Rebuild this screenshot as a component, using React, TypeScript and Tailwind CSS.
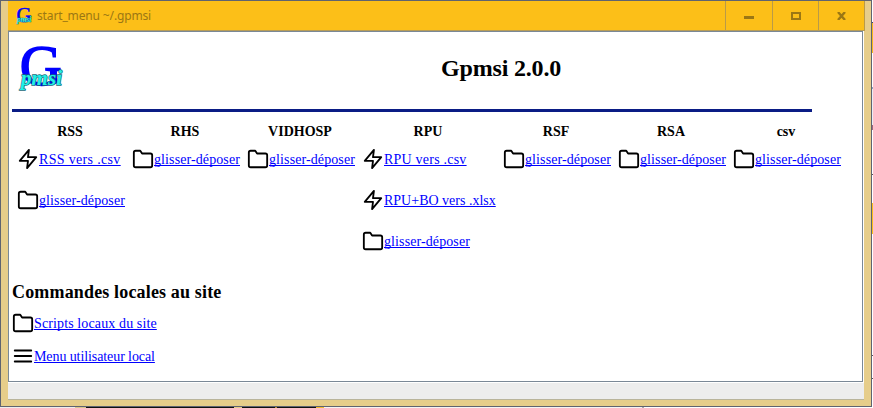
import React from "react";

type Kind = "folder" | "zap" | "menu";
type Item = { kind: Kind; label: string; tracking: string };

const drop: Item = { kind: "folder", label: "glisser-déposer", tracking: "tracking-[0.1px]" };

const columns: { title: string; width: string; items: Item[] }[] = [
  { title: "RSS", width: "w-[115px]", items: [{ kind: "zap", label: "RSS vers .csv", tracking: "tracking-[0.33px]" }, drop] },
  { title: "RHS", width: "w-[115px]", items: [drop] },
  { title: "VIDHOSP", width: "w-[115px]", items: [drop] },
  {
    title: "RPU",
    width: "w-[141px]",
    items: [
      { kind: "zap", label: "RPU vers .csv", tracking: "tracking-[0.22px]" },
      { kind: "zap", label: "RPU+BO vers .xlsx", tracking: "tracking-normal" },
      drop,
    ],
  },
  { title: "RSF", width: "w-[115px]", items: [drop] },
  { title: "RSA", width: "w-[115px]", items: [drop] },
  { title: "csv", width: "w-[115px]", items: [drop] },
];

const local: Item[] = [
  { kind: "folder", label: "Scripts locaux du site", tracking: "tracking-[0.12px]" },
  { kind: "menu", label: "Menu utilisateur local", tracking: "tracking-[-0.09px]" },
];

function Glyph({ kind }: { kind: Kind }) {
  return (
    <svg viewBox="0 0 24 24" className="size-[22px] shrink-0 fill-none stroke-black stroke-2" strokeLinecap="round" strokeLinejoin="round">
      {kind === "folder" && <path d="M22 19a2 2 0 0 1-2 2H4a2 2 0 0 1-2-2V5a2 2 0 0 1 2-2h5l2 3h9a2 2 0 0 1 2 2z" />}
      {kind === "zap" && <path d="M13 2 3 14h9l-1 8 10-12h-9z" />}
      {kind === "menu" && <path d="M3 6h18M3 12h18M3 18h18" />}
    </svg>
  );
}

function Command({ item }: { item: Item }) {
  return (
    <div className="flex h-[22px] items-center">
      <Glyph kind={item.kind} />
      <a className={`${item.tracking} mt-[2px] text-[14px] leading-[16px] whitespace-nowrap text-[#0000ff] underline decoration-1 underline-offset-1 [text-decoration-skip-ink:none]`}>
        {item.label}
      </a>
    </div>
  );
}

function Logo({ className }: { className: string }) {
  return (
    <svg viewBox="0 0 44 48" className={`${className} overflow-visible`}>
      <text x="0.8" y="43.2" fontSize="57.5" textLength="42" lengthAdjust="spacingAndGlyphs" fill="#0000ff" stroke="#0000ff" strokeWidth="1.5" fontFamily="Liberation Serif, serif">G</text>
      <text x="2" y="43" fontSize="20.5" fontWeight="bold" fontStyle="italic" textLength="41" lengthAdjust="spacingAndGlyphs" fill="#20f0e8" stroke="#186878" strokeWidth="1.3" paintOrder="stroke" fontFamily="Liberation Serif, serif">pmsi</text>
    </svg>
  );
}

export default function App() {
  return (
    <div className="h-[408px] w-[873px] overflow-hidden bg-white font-['Liberation_Serif',serif] text-black">
      <div className="flex h-[407px]">
        <div className="flex h-[407px] w-[872px] shrink-0 flex-col border border-[#5f6370] bg-[#e6cd8a] px-[7px] pb-[6px]">
          <div className="flex h-[30px] w-[857px] shrink-0 border-b border-[#b79c55] bg-[#fcbf18] text-[#9b7714]">
            <div className="flex flex-1 items-center pl-[8px]">
              <Logo className="h-[17px] w-[16px]" />
              <span className="ml-[5px] font-['Noto_Sans',sans-serif] text-[12px] tracking-[-0.14px]">start_menu ~/.gpmsi</span>
            </div>
            <div className="flex w-[47px] items-center justify-center border-l border-[#b99a48]">
              <span className="mt-[4px] h-[3px] w-[10px] bg-[#9b7714]" />
            </div>
            <div className="flex w-[46px] items-center justify-center border-l border-[#b99a48]">
              <span className="h-[8px] w-[10px] border-2 border-[#9b7714]" />
            </div>
            <div className="flex w-[47px] items-center justify-center border-x border-[#b99a48]">
              <svg viewBox="0 0 9 8" className="h-[8px] w-[9px] fill-none stroke-[#9b7714] stroke-[2.4]"><path d="M1 0 8 8M8 0 1 8" /></svg>
            </div>
          </div>
          <div className="flex h-[369px] w-[856px] shrink-0 flex-col border-b border-[#b9b49b] bg-[#ededed]">
            <div className="h-[352px] border-r border-b border-white">
              <div className="flex h-[351px] flex-col border border-[#7a8896] bg-white pl-[3px]">
                <header className="flex h-[77px] w-[800px] shrink-0">
                  <Logo className="mt-[10px] ml-[7px] h-[48px] w-[44px] shrink-0" />
                  <h1 className="mt-[22px] ml-[378px] text-[24px] leading-[28px] font-bold tracking-[-0.18px] whitespace-nowrap">Gpmsi 2.0.0</h1>
                </header>
                <div className="h-[3px] w-[800px] shrink-0 bg-[#0a1c85]" />
                <div className="flex h-[170px] shrink-0 pl-[5px]">
                  {columns.map((c) => (
                    <section key={c.title} className={`${c.width} shrink-0`}>
                      <h2 className="mt-[12px] mr-[9px] text-center text-[14px] leading-[16px] font-bold">{c.title}</h2>
                      <div className="mt-[8px] flex flex-col gap-[19px]">
                        {c.items.map((i) => <Command key={i.label} item={i} />)}
                      </div>
                    </section>
                  ))}
                </div>
                <h2 className="text-[18px] leading-[20px] font-bold tracking-[0.16px]">Commandes locales au site</h2>
                <div className="mt-[10px] flex flex-col gap-[11px]">
                  {local.map((i) => <Command key={i.label} item={i} />)}
                </div>
              </div>
            </div>
          </div>
        </div>
        <div className="flex w-px flex-col">
          <div className="h-[22px] bg-white" />
          <div className="h-px bg-[#3c4468]" />
          <div className="h-[30px] bg-[#f9ba18]" />
          <div className="h-[34px] bg-white" />
          <div className="h-[2px] bg-[#8fa3bd]" />
          <div className="h-[36px] bg-[#e9eef4]" />
          <div className="h-[5px] bg-[#a0687a]" />
          <div className="h-[44px] bg-white" />
          <div className="h-px bg-[#555555]" />
          <div className="h-[28px] bg-white" />
          <div className="h-[31px] bg-[#fcbf18]" />
          <div className="h-[121px] bg-white" />
          <div className="h-px bg-[#555555]" />
          <div className="h-[22px] bg-white" />
          <div className="h-px bg-[#555555]" />
        </div>
      </div>
      <div className="flex h-px">
        <div className="w-[75px] bg-[#eeeeee]" />
        <div className="w-[11px] bg-[#d8c68d]" />
        <div className="w-[148px] bg-[#101010]" />
        <div className="w-[8px] bg-[#e6cd8a]" />
        <div className="w-[33px] bg-[#101010]" />
        <div className="w-[2px] bg-[#b98b35]" />
        <div className="w-[39px] bg-[#101010]" />
        <div className="w-[8px] bg-[#f2b92b]" />
        <div className="w-[318px] bg-[#f4f4f4]" />
        <div className="w-[2px] bg-[#aaaaaa]" />
      </div>
    </div>
  );
}
